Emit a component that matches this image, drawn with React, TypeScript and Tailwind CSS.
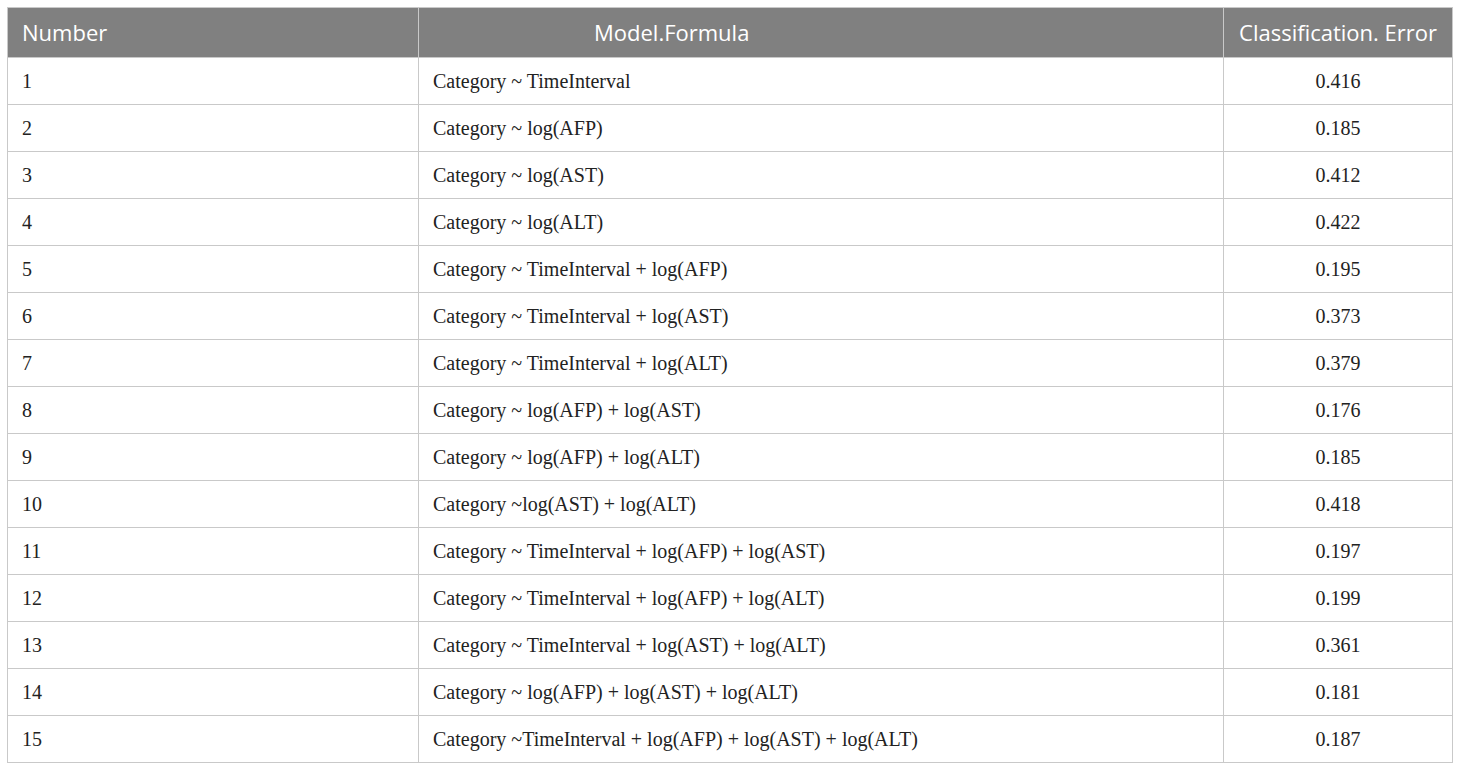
import React from "react";

const rows: [string, string, string][] = [
  ["1", "Category ~ TimeInterval", "0.416"],
  ["2", "Category ~ log(AFP)", "0.185"],
  ["3", "Category ~ log(AST)", "0.412"],
  ["4", "Category ~ log(ALT)", "0.422"],
  ["5", "Category ~ TimeInterval + log(AFP)", "0.195"],
  ["6", "Category ~ TimeInterval + log(AST)", "0.373"],
  ["7", "Category ~ TimeInterval + log(ALT)", "0.379"],
  ["8", "Category ~ log(AFP) + log(AST)", "0.176"],
  ["9", "Category ~ log(AFP) + log(ALT)", "0.185"],
  ["10", "Category ~log(AST) + log(ALT)", "0.418"],
  ["11", "Category ~ TimeInterval + log(AFP) + log(AST)", "0.197"],
  ["12", "Category ~ TimeInterval + log(AFP) + log(ALT)", "0.199"],
  ["13", "Category ~ TimeInterval + log(AST) + log(ALT)", "0.361"],
  ["14", "Category ~ log(AFP) + log(AST) + log(ALT)", "0.181"],
  ["15", "Category ~TimeInterval + log(AFP) + log(AST) + log(ALT)", "0.187"],
];

export default function App() {
  return (
    <div className="w-[1460px] h-[770px] bg-white pt-[7px] pl-[7px]">
      <table className="border-collapse table-fixed w-[1445px] border border-[#c9c9c9]">
        <colgroup>
          <col className="w-[411px]" />
          <col className="w-[805px]" />
          <col className="w-[229px]" />
        </colgroup>
        <thead>
          <tr className="h-[50px] bg-[#808080] text-white text-[22px] font-['Open_Sans',sans-serif]">
            <th className="font-normal text-left pl-[14px] border border-[#c9c9c9]">Number</th>
            <th className="font-normal text-left pl-[175px] border border-[#c9c9c9]">Model.Formula</th>
            <th className="font-normal text-center px-0 border border-[#c9c9c9] whitespace-nowrap">Classification. Error</th>
          </tr>
        </thead>
        <tbody className="font-['Liberation_Serif',serif] text-[20px] text-[#222]">
          {rows.map((r) => (
            <tr key={r[0]} className="h-[47px]">
              <td className="pl-[14px] border border-[#c9c9c9]">{r[0]}</td>
              <td className="pl-[14px] border border-[#c9c9c9] whitespace-nowrap">{r[1]}</td>
              <td className="text-center border border-[#c9c9c9]">{r[2]}</td>
            </tr>
          ))}
        </tbody>
      </table>
    </div>
  );
}
